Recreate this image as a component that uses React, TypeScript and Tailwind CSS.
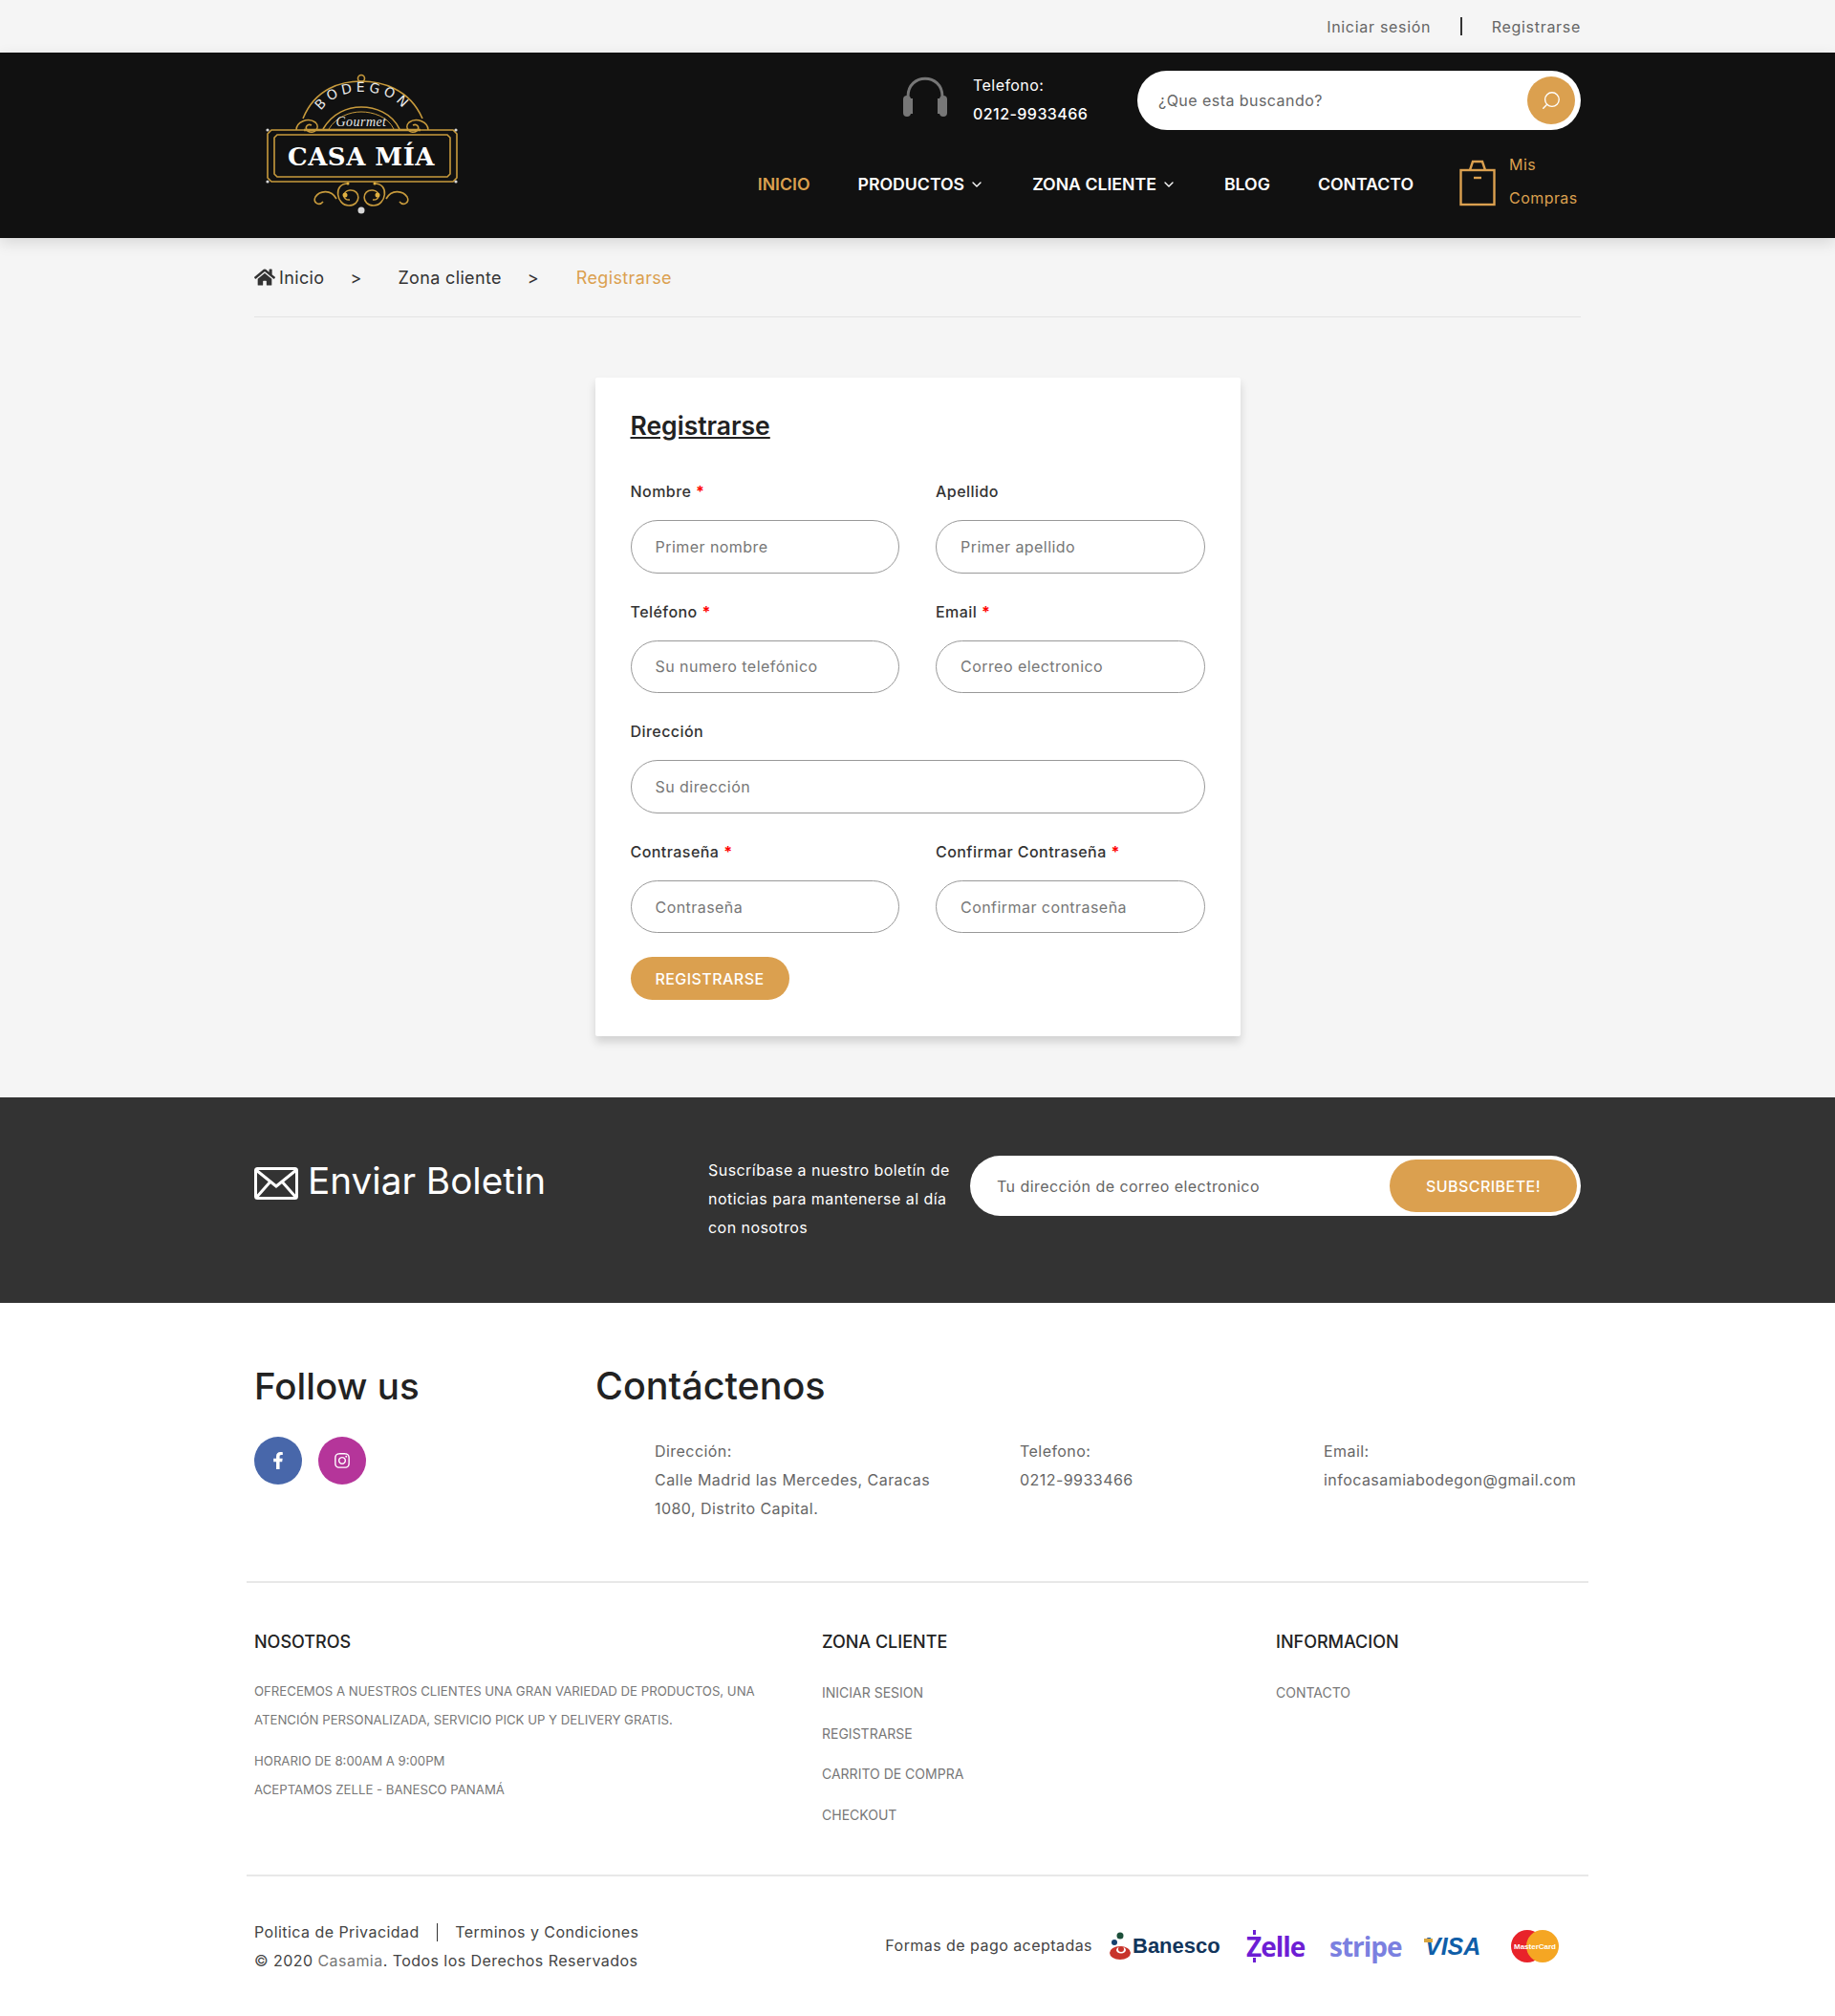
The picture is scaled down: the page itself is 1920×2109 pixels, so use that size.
import { ChevronDown, Search } from 'lucide-react';
import { FaFacebookF, FaHome, FaInstagram } from 'react-icons/fa';

const font = "font-['Inter','Liberation_Sans',sans-serif]";

function Logo() {
  return (
    <svg width="240" height="160" viewBox="0 0 240 160" className="block">
      <defs>
        <path id="arc" d="M74 50 C88 18 150 18 166 50" fill="none" />
      </defs>
      <g fill="none" stroke="#c79a3c" strokeWidth="1.6">
        <path d="M57 54 C70 22 98 15 118 15 C138 15 168 22 182 54" />
        <path d="M78 65 C88 48 104 42 118 42 C132 42 150 48 158 65" />
        <path d="M84 65 C92 52 106 47 118 47 C130 47 146 52 152 65" strokeWidth="1" />
        <circle cx="118" cy="12" r="3.5" />
        <path d="M50 66 C50 58 62 52 70 58 C76 64 68 71 62 67 C58 63 62 59 66 61" />
        <path d="M188 66 C188 58 176 52 168 58 C162 64 170 71 176 67 C180 63 176 59 172 61" />
        <path d="M58 66 H180" strokeWidth="2.4" />
        <path d="M24 66 H214 L218 70 V116 L214 120 H24 L20 116 V70 Z" />
        <path d="M30 71 H208 L211 74 V112 L208 115 H30 L27 112 V74 Z" />
        <path d="M104 122 C88 122 92 145 105 145 C118 145 118 128 106 129 C98 130 98 140 106 139" />
        <path d="M132 122 C148 122 144 145 131 145 C118 145 118 128 130 129 C138 130 138 140 130 139" />
        <path d="M92 138 C86 127 74 130 70 136 C67 142 74 146 78 141" />
        <path d="M144 138 C150 127 162 130 166 136 C169 142 162 146 158 141" />
      </g>
      <g fill="#e0b040">
        <circle cx="101" cy="134" r="2.5" />
        <circle cx="135" cy="134" r="2.5" />
        <circle cx="104" cy="122" r="1.5" />
        <circle cx="132" cy="122" r="1.5" />
      </g>
      <g fill="#d8d8d8">
        <circle cx="20" cy="66" r="1.6" />
        <circle cx="217" cy="66" r="1.6" />
        <circle cx="20" cy="120" r="1.6" />
        <circle cx="217" cy="120" r="1.6" />
        <circle cx="118" cy="150" r="3.5" />
      </g>
      <text fontFamily="'DejaVu Sans',sans-serif" fontSize="14" fill="#e8e8e8" letterSpacing="4">
        <textPath href="#arc" startOffset="50%" textAnchor="middle">BODEGON</textPath>
      </text>
      <text x="118" y="62" textAnchor="middle" fontFamily="'Liberation Serif',serif" fontStyle="italic" fontSize="14" fill="#e8e8e8">Gourmet</text>
      <text x="118" y="103" textAnchor="middle" fontFamily="'DejaVu Serif',serif" fontWeight="700" fontSize="26" fill="#ffffff" letterSpacing="0.5">CASA MÍA</text>
    </svg>
  );
}

function Headset() {
  return (
    <svg width="50" height="45" viewBox="0 0 50 45" fill="none" className="block">
      <path d="M7 28 V22 C7 -3 43 -3 43 22 V28" stroke="#777" strokeWidth="3" />
      <rect x="2" y="21" width="8" height="22" rx="4" fill="#777" />
      <rect x="40" y="21" width="8" height="22" rx="4" fill="#777" />
      <rect x="9" y="24" width="3" height="16" fill="#777" />
      <rect x="38" y="24" width="3" height="16" fill="#777" />
    </svg>
  );
}

function Bag() {
  return (
    <svg width="38" height="50" viewBox="0 0 38 50" fill="none" stroke="#dba04f" strokeWidth="2.4" className="block">
      <rect x="1.5" y="12" width="35" height="36" />
      <path d="M11 12 L14 3 H24 L27 12" />
      <path d="M15 20 H23" />
    </svg>
  );
}

function Envelope() {
  return (
    <svg width="46" height="34" viewBox="0 0 46 34" fill="none" stroke="#fff" strokeWidth="3" className="block">
      <rect x="1.5" y="1.5" width="43" height="31" rx="2" />
      <path d="M2 3 L23 20 L44 3" />
      <path d="M2 32 L17 15 M44 32 L29 15" />
    </svg>
  );
}

function Field({ label, placeholder, required }: { label: string; placeholder: string; required?: boolean }) {
  return (
    <div>
      <label className="block h-[30px] text-[16px] leading-[30px] font-medium text-[#333]">
        {label} {required && <span className="font-bold text-[#f00]">*</span>}
      </label>
      <input
        placeholder={placeholder}
        className="mt-[15px] block h-[55.6px] w-full rounded-full border border-[#999] bg-white px-[25px] text-[16px] tracking-[0.45px] text-[#333] outline-none placeholder:text-[#777]"
      />
    </div>
  );
}

function Payments() {
  return (
    <div className="flex items-center tracking-normal">
      <svg width="24" height="30" viewBox="0 0 24 30" className="block">
        <circle cx="12" cy="4" r="3.5" fill="#1c4f3a" />
        <circle cx="6" cy="11" r="3" fill="#15406e" />
        <ellipse cx="12" cy="22" rx="11" ry="7" fill="#c8342b" />
        <ellipse cx="13" cy="19" rx="5" ry="3.5" fill="#fff" />
        <circle cx="13" cy="18" r="3" fill="#c8342b" />
      </svg>
      <span className="ml-[1px] w-[93px] font-['Liberation_Sans',sans-serif] text-[22px] leading-none font-bold text-[#12355b]">Banesco</span>
      <span className="relative ml-[26px] w-[65px] font-['Open_Sans',sans-serif] text-[28px] leading-none font-bold tracking-[-1px] text-[#6d1ed4]">
        Zelle
        <span className="absolute top-[-3px] left-[7px] h-[5px] w-[3px] bg-[#6d1ed4]"></span>
        <span className="absolute bottom-[-3px] left-[7px] h-[5px] w-[3px] bg-[#6d1ed4]"></span>
      </span>
      <span className="ml-[22px] w-[73px] font-['Open_Sans',sans-serif] text-[28px] leading-none font-bold tracking-[-1px] text-[#7b80e0]">stripe</span>
      <span className="relative ml-[27px] w-[58px] font-['Liberation_Sans',sans-serif] text-[25px] leading-none font-bold italic text-[#0f5ea8]">
        VISA
        <span className="absolute top-[4px] left-[-1px] h-[4px] w-[9px] bg-[#d9a63f]"></span>
      </span>
      <svg width="50" height="34" viewBox="0 0 50 34" className="ml-[32px] block">
        <circle cx="17" cy="17" r="17" fill="#e8232a" />
        <circle cx="33" cy="17" r="17" fill="#f5a623" />
        <text x="25" y="20" textAnchor="middle" fontFamily="'Liberation Sans',sans-serif" fontWeight="700" fontSize="8" fill="#fff">MasterCard</text>
      </svg>
    </div>
  );
}

export default function App() {
  return (
    <div className={`${font} min-h-[2109px] bg-[#f5f5f5] text-[16px] tracking-[0.45px] text-[#222]`}>
      {/* Top bar */}
      <div className="h-[55px]">
        <div className="mx-auto flex h-full w-[1388px] items-center justify-end tracking-[0.7px] text-[#666]">
          <span>Iniciar sesión</span>
          <span className="mx-[31px] h-[19px] w-[1.5px] bg-[#333]"></span>
          <span>Registrarse</span>
        </div>
      </div>

      {/* Header */}
      <header className="h-[194px] bg-[#111] shadow-[0_5px_15px_rgba(0,0,0,0.12)]">
        <div className="mx-auto flex h-full w-[1388px]">
          <div className="-ml-[6px] pt-[15px]">
            <Logo />
          </div>
          <div className="flex-1">
            <div className="flex h-[99px] items-start justify-end pt-[19px]">
              <div className="mt-[5px]">
                <Headset />
              </div>
              <div className="ml-[25px] w-[172px] text-[16px] leading-[30px] text-white">
                <div>Telefono:</div>
                <div className="font-medium">0212-9933466</div>
              </div>
              <div className="flex h-[62px] w-[464px] items-center rounded-full bg-white pr-[6px] pl-[22px]">
                <span className="flex-1 text-[#666]">¿Que esta buscando?</span>
                <span className="flex h-[50px] w-[50px] items-center justify-center rounded-full bg-[#dba04f]">
                  <Search size={22} strokeWidth={1.5} className="-scale-x-100 text-white" />
                </span>
              </div>
            </div>
            <div className="mt-[1px] flex items-center justify-end text-[17.7px] font-semibold tracking-normal text-white">
              <span className="text-[#dba04f]">INICIO</span>
              <span className="ml-[50px] flex items-center gap-[5px]">PRODUCTOS <ChevronDown size={16} /></span>
              <span className="ml-[50px] flex items-center gap-[5px]">ZONA CLIENTE <ChevronDown size={16} /></span>
              <span className="ml-[50px]">BLOG</span>
              <span className="ml-[50px]">CONTACTO</span>
              <span className="mb-[4px] ml-[48px]"><Bag /></span>
              <div className="mb-[6px] ml-[14px] w-[75px] text-[16px] leading-[35px] font-normal tracking-[0.45px] text-[#dba04f]">
                <div>Mis</div>
                <div>Compras</div>
              </div>
            </div>
          </div>
        </div>
      </header>

      {/* Breadcrumb */}
      <div className="mx-auto flex h-[83px] w-[1388px] items-center border-b border-[#e3e3e3] text-[18px] tracking-[0.35px] text-[#333]">
        <FaHome size={22} className="mr-[4px]" />
        <span>Inicio</span>
        <span className="ml-[27px] w-[23px]">&gt;</span>
        <span className="ml-[27px]">Zona cliente</span>
        <span className="ml-[27px] w-[23px]">&gt;</span>
        <span className="ml-[28px] text-[#dba04f]">Registrarse</span>
      </div>

      {/* Form card */}
      <main className="pt-[63px] pb-[64px]">
        <div className="mx-auto h-[689px] w-[675px] rounded-[2px] bg-white px-[37px] pt-[33px] shadow-[0_6px_10px_rgba(0,0,0,0.15)]">
          <h1 className="h-[35px] text-[26.5px] leading-[35px] font-semibold tracking-normal text-[#222] underline">Registrarse</h1>
          <div className="mt-[36px] grid grid-cols-2 gap-x-[38px] gap-y-[25px]">
            <Field label="Nombre" placeholder="Primer nombre" required />
            <Field label="Apellido" placeholder="Primer apellido" />
            <Field label="Teléfono" placeholder="Su numero telefónico" required />
            <Field label="Email" placeholder="Correo electronico" required />
            <div className="col-span-2">
              <Field label="Dirección" placeholder="Su dirección" />
            </div>
            <Field label="Contraseña" placeholder="Contraseña" required />
            <Field label="Confirmar Contraseña" placeholder="Confirmar contraseña" required />
          </div>
          <button className="mt-[25px] block h-[45px] w-[166px] rounded-full bg-[#dba04f] text-[16px] font-medium text-white">REGISTRARSE</button>
        </div>
      </main>

      {/* Newsletter */}
      <section className="h-[215px] bg-[#333]">
        <div className="mx-auto flex w-[1388px] items-start pt-[61px]">
          <div className="flex w-[475px] items-center pt-[1px] tracking-normal text-white">
            <span className="mt-[5px]"><Envelope /></span>
            <span className="ml-[10px] text-[38.7px] leading-[50px]">Enviar Boletin</span>
          </div>
          <p className="w-[274px] pr-[6px] text-[16px] leading-[30px] text-white">
            Suscríbase a nuestro boletín de noticias para mantenerse al día con nosotros
          </p>
          <div className="flex h-[63px] flex-1 items-center rounded-full bg-white pr-[4px] pl-[28px]">
            <span className="flex-1 text-[#666]">Tu dirección de correo electronico</span>
            <span className="flex h-[55px] w-[196px] items-center justify-center rounded-full bg-[#dba04f] font-medium text-white">SUBSCRIBETE!</span>
          </div>
        </div>
      </section>

      {/* Footer */}
      <footer className="h-[746px] bg-white">
        <div className="mx-auto w-[1388px]">
          <div className="flex h-[291px] pt-[61px]">
            <div className="w-[357px]">
              <h2 className="text-[38.5px] leading-[52px] font-medium tracking-normal text-[#222]">Follow us</h2>
              <div className="mt-[27px] flex gap-[17px] text-white">
                <span className="flex h-[50px] w-[50px] items-center justify-center rounded-full bg-[#4867aa]"><FaFacebookF size={18} /></span>
                <span className="flex h-[50px] w-[50px] items-center justify-center rounded-full bg-[#b5359a]"><FaInstagram size={18} /></span>
              </div>
            </div>
            <div className="flex-1">
              <h2 className="text-[39.5px] leading-[52px] font-medium tracking-normal text-[#222]">Contáctenos</h2>
              <div className="mt-[27px] grid grid-cols-[382px_318px_1fr] pl-[62px] leading-[30px] text-[#666]">
                <div>
                  <div>Dirección:</div>
                  <div>Calle Madrid las Mercedes, Caracas</div>
                  <div>1080, Distrito Capital.</div>
                </div>
                <div>
                  <div>Telefono:</div>
                  <div>0212-9933466</div>
                </div>
                <div>
                  <div>Email:</div>
                  <div>infocasamiabodegon@gmail.com</div>
                </div>
              </div>
            </div>
          </div>

          <div className="-mx-2 border-t-2 border-[#e8e8e8]"></div>

          <div className="grid h-[305px] grid-cols-[594px_475px_1fr] pt-[48px] tracking-normal">
            <div>
              <h3 className="text-[18px] leading-[28px] font-medium text-[#222]">NOSOTROS</h3>
              <div className="mt-[22px] text-[13.2px] leading-[30px] text-[#777]">
                <p className="w-[540px]">OFRECEMOS A NUESTROS CLIENTES UNA GRAN VARIEDAD DE PRODUCTOS, UNA ATENCIÓN PERSONALIZADA, SERVICIO PICK UP Y DELIVERY GRATIS.</p>
                <p className="mt-[13px]">HORARIO DE 8:00AM A 9:00PM</p>
                <p>ACEPTAMOS ZELLE - BANESCO PANAMÁ</p>
              </div>
            </div>
            <div>
              <h3 className="text-[18px] leading-[28px] font-medium text-[#222]">ZONA CLIENTE</h3>
              <ul className="mt-[18px] text-[14px] leading-[42.5px] text-[#777]">
                <li>INICIAR SESION</li>
                <li>REGISTRARSE</li>
                <li>CARRITO DE COMPRA</li>
                <li>CHECKOUT</li>
              </ul>
            </div>
            <div>
              <h3 className="text-[18px] leading-[28px] font-medium text-[#222]">INFORMACION</h3>
              <ul className="mt-[18px] text-[14px] leading-[42.5px] text-[#777]">
                <li>CONTACTO</li>
              </ul>
            </div>
          </div>

          <div className="-mx-2 border-t-2 border-[#e8e8e8]"></div>

          <div className="flex items-center justify-between pt-[43px] pr-[23px] text-[#444]">
            <div className="leading-[30px]">
              <div className="flex items-center">
                <span>Politica de Privacidad</span>
                <span className="mx-[18px] h-[19px] w-[1.5px] bg-[#333]"></span>
                <span>Terminos y Condiciones</span>
              </div>
              <div>© 2020 <span className="text-[#777]">Casamia</span>. Todos los Derechos Reservados</div>
            </div>
            <div className="flex items-center">
              <span className="mr-[17px] -mt-[3px]">Formas de pago aceptadas</span>
              <Payments />
            </div>
          </div>
        </div>
      </footer>
    </div>
  );
}
